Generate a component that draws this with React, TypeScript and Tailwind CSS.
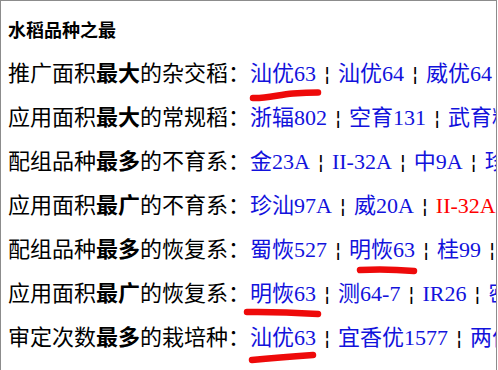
import React from "react";

type Link = { t: string; red?: boolean; ul?: number };
type Row = { a: string; b: string; c: string; links: Link[] };

const rows: Row[] = [
  { a: "推广面积", b: "最大", c: "的杂交稻：", links: [{ t: "汕优63", ul: 1 }, { t: "汕优64" }, { t: "威优64" }, { t: "汕优10号" }] },
  { a: "应用面积", b: "最大", c: "的常规稻：", links: [{ t: "浙辐802" }, { t: "空育131" }, { t: "武育粳3号" }] },
  { a: "配组品种", b: "最多", c: "的不育系：", links: [{ t: "金23A" }, { t: "II-32A" }, { t: "中9A" }, { t: "珍汕97A" }] },
  { a: "应用面积", b: "最广", c: "的不育系：", links: [{ t: "珍汕97A" }, { t: "威20A" }, { t: "II-32A", red: true }] },
  { a: "配组品种", b: "最多", c: "的恢复系：", links: [{ t: "蜀恢527" }, { t: "明恢63", ul: 2 }, { t: "桂99" }, { t: "密阳46" }] },
  { a: "应用面积", b: "最广", c: "的恢复系：", links: [{ t: "明恢63", ul: 3 }, { t: "测64-7" }, { t: "IR26" }, { t: "密阳46" }] },
  { a: "审定次数", b: "最多", c: "的栽培种：", links: [{ t: "汕优63", ul: 4 }, { t: "宜香优1577" }, { t: "两优培九" }] },
  { a: "种植年限", b: "最长", c: "的杂交稻：", links: [{ t: "汕优63" }, { t: "汕优64" }, { t: "威优6号" }] },
];

function Underline({ kind }: { kind: number }) {
  if (kind === 1)
    return (
      <svg className="absolute left-[-1px] top-[36px] overflow-visible" width="74" height="14">
        <path d="M4 10 C 18 10.5, 30 6.5, 44 5.5 S 62 4.5, 69 4.5" stroke="#ee0a0a" strokeWidth="6.5" fill="none" strokeLinecap="round" />
      </svg>
    );
  if (kind === 2)
    return (
      <svg className="absolute left-[7px] top-[37px] overflow-visible" width="62" height="12">
        <path d="M4 5 Q 30 3.5 58 6" stroke="#ee0a0a" strokeWidth="6.5" fill="none" strokeLinecap="round" />
      </svg>
    );
  if (kind === 3)
    return (
      <svg className="absolute left-[-7px] top-[35px] overflow-visible" width="80" height="12">
        <path d="M4 5 Q 35 4.5 75 7" stroke="#ee0a0a" strokeWidth="6.5" fill="none" strokeLinecap="round" />
      </svg>
    );
  return (
    <svg className="absolute left-[-2px] top-[34px] overflow-visible" width="70" height="16">
      <path d="M4 10 Q 30 7.5 65 5" stroke="#ee0a0a" strokeWidth="6.5" fill="none" strokeLinecap="round" />
    </svg>
  );
}

export default function App() {
  return (
    <div className="w-[498px] h-[370px] bg-white overflow-hidden">
      <div
        className="w-[497px] h-[370px] border-l border-t border-r border-[#8c8c8c] overflow-hidden pl-[7px] pt-[14px]"
        style={{ fontFamily: '"Liberation Serif", "Noto Sans CJK SC", serif' }}
      >
        <div
          className="text-[18px] leading-[28px] font-bold text-black mb-[6px]"
          style={{ fontFamily: '"Noto Sans CJK SC", sans-serif' }}
        >
          水稻品种之最
        </div>
        {rows.map((r, i) => (
          <div key={i} className="relative h-[44px] leading-[44px] text-[22px] whitespace-nowrap text-black">
            <span style={{ fontFamily: '"Noto Sans CJK SC", sans-serif' }}>
              {r.a}
              <b className="font-bold">{r.b}</b>
              {r.c}
            </span>
            {r.links.map((l, j) => (
              <React.Fragment key={j}>
                {j > 0 && (
                  <span
                    className="inline-block w-[22px] text-center text-[#000000] text-[20px]"
                    style={{ fontFamily: '"DejaVu Sans", sans-serif' }}
                  >
                    ¦
                  </span>
                )}
                <span className={`relative inline-block leading-[44px] ${l.red ? "text-[#ff0000]" : "text-[#1212dc]"}`}>
                  {l.t}
                  {l.ul ? <Underline kind={l.ul} /> : null}
                </span>
              </React.Fragment>
            ))}
          </div>
        ))}
      </div>
    </div>
  );
}
